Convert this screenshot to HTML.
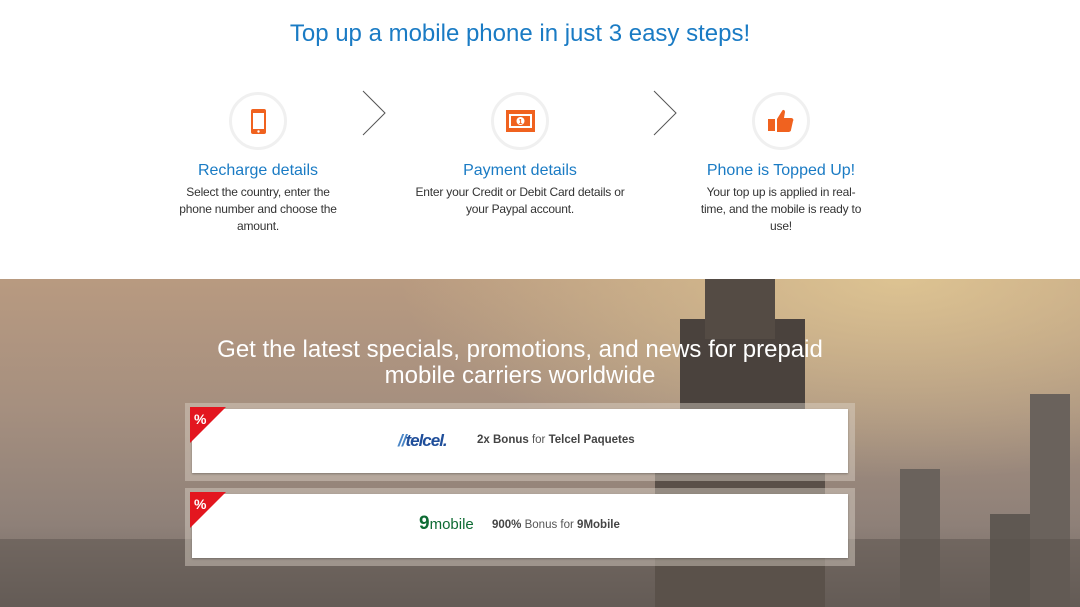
<!DOCTYPE html>
<html><head><style>
body{margin:0;width:1080px;height:607px;overflow:hidden;font-family:"Liberation Sans",sans-serif;background:#fff;position:relative}
h1{position:absolute;top:20px;left:0;width:1040px;text-align:center;margin:0;font-weight:normal;font-size:24px;color:#1a7bc4}
.step{position:absolute;top:92px;width:240px;text-align:center;white-space:nowrap}
.circ{width:52px;height:52px;border:3px solid #f0f0f0;border-radius:50%;margin:0 auto;position:relative}
.step h3{margin:12px 0 4px;font-weight:normal;font-size:16px;color:#1a7bc4}
.step p{margin:0;font-size:12px;line-height:17px;color:#333;letter-spacing:-0.2px}
.arrow{position:absolute;top:90px}
.bg{position:absolute;top:279px;left:0;width:1080px;height:328px;background:linear-gradient(180deg,#b89a80 0%,#a58f7f 40%,#8e8078 75%,#6e6560 100%);overflow:hidden}
.bg .glow{position:absolute;inset:0;background:radial-gradient(ellipse 500px 200px at 900px 0,rgba(230,205,150,.8),transparent)}
.bld{position:absolute;background:#4d4540}
.promo{position:absolute;top:58px;left:0;width:1040px;text-align:center;color:#fff;font-size:24px;line-height:26px}
.frame{position:absolute;left:185px;width:670px;height:78px;background:rgba(220,210,200,.45)}
.card{position:absolute;left:7px;top:6px;width:656px;height:64px;background:#fff;box-shadow:0 1px 2px rgba(0,0,0,.3)}
.tri{position:absolute;left:-2px;top:-2px;width:0;height:0;border-top:36px solid #e3161f;border-right:36px solid transparent}
.pc{position:absolute;left:2px;top:2px;color:#fff;font-size:14px;font-weight:bold}
.txt{position:absolute;top:25px;font-size:11.5px;color:#555}
.txt b{color:#444}
</style></head><body>
<h1>Top up a mobile phone in just 3 easy steps!</h1>
<div class="step" style="left:138px"><div class="circ">
<svg width="52" height="52" viewBox="0 0 52 52"><rect x="19" y="14" width="15" height="25" rx="2" fill="#f0621f"/><rect x="21" y="18" width="11" height="16" fill="#fff"/><circle cx="26.5" cy="36.5" r="1.2" fill="#fff"/></svg></div>
<h3>Recharge details</h3><p>Select the country, enter the<br>phone number and choose the<br>amount.</p></div>
<svg class="arrow" style="left:362px" width="26" height="46"><path d="M1 1L23 23L1 45" fill="none" stroke="#555" stroke-width="1"/></svg>
<div class="step" style="left:400px"><div class="circ">
<svg width="52" height="52" viewBox="0 0 52 52"><rect x="12" y="15" width="29" height="22" fill="#f0621f"/><path d="M15 19h23v14h-23z" fill="#fff"/><rect x="17" y="21" width="19" height="10" fill="#f0621f"/><circle cx="26.5" cy="26" r="4" fill="#fff"/><text x="26.5" y="29" font-size="7" font-weight="bold" text-anchor="middle" fill="#f0621f" font-family="Liberation Sans">1</text></svg></div>
<h3>Payment details</h3><p>Enter your Credit or Debit Card details or<br>your Paypal account.</p></div>
<svg class="arrow" style="left:653px" width="26" height="46"><path d="M1 1L23 23L1 45" fill="none" stroke="#555" stroke-width="1"/></svg>
<div class="step" style="left:661px"><div class="circ">
<svg width="52" height="52" viewBox="0 0 52 52"><rect x="13" y="24" width="7" height="12" fill="#f0621f"/><path d="M22 24l5-8c1-2 3-1 3 1l-1 6h7c2 0 3 2 2 3l-2 9c0 1-1 2-3 2h-11z" fill="#f0621f"/></svg></div>
<h3>Phone is Topped Up!</h3><p>Your top up is applied in real-<br>time, and the mobile is ready to<br>use!</p></div>
<div class="bg"><div class="glow"></div>
<div class="bld" style="left:680px;top:40px;width:125px;height:300px;background:#4a423d"></div>
<div class="bld" style="left:705px;top:0;width:70px;height:60px;background:#544b44"></div>
<div class="bld" style="left:655px;top:140px;width:170px;height:200px;background:#5a5049"></div>
<div class="bld" style="left:1030px;top:115px;width:40px;height:220px;background:#6a625c"></div>
<div class="bld" style="left:900px;top:190px;width:40px;height:140px;background:#6a625c"></div>
<div class="bld" style="left:990px;top:235px;width:40px;height:100px;background:#5f5852"></div>
<div class="bld" style="left:0;top:260px;width:1080px;height:70px;background:rgba(90,82,76,.5)"></div>
<div class="promo">Get the latest specials, promotions, and news for prepaid<br>mobile carriers worldwide</div>
<div class="frame" style="top:124px"><div class="card"><div class="tri"></div><div class="pc">%</div>
<div style="position:absolute;left:206px;top:22px;font-style:italic;font-weight:bold;font-size:17px;color:#1f4e9a;letter-spacing:-1px"><span style="color:#4a86c6">//</span>telcel.</div>
<div class="txt" style="left:285px"><b>2x Bonus</b> for <b>Telcel Paquetes</b></div></div></div>
<div class="frame" style="top:209px"><div class="card"><div class="tri"></div><div class="pc">%</div>
<div style="position:absolute;left:227px;top:19px;font-size:15px;color:#0e6b34"><b style="font-size:19px">9</b>mobile</div>
<div class="txt" style="left:300px"><b>900%</b> Bonus for <b>9Mobile</b></div></div></div>
</div>
</body></html>
